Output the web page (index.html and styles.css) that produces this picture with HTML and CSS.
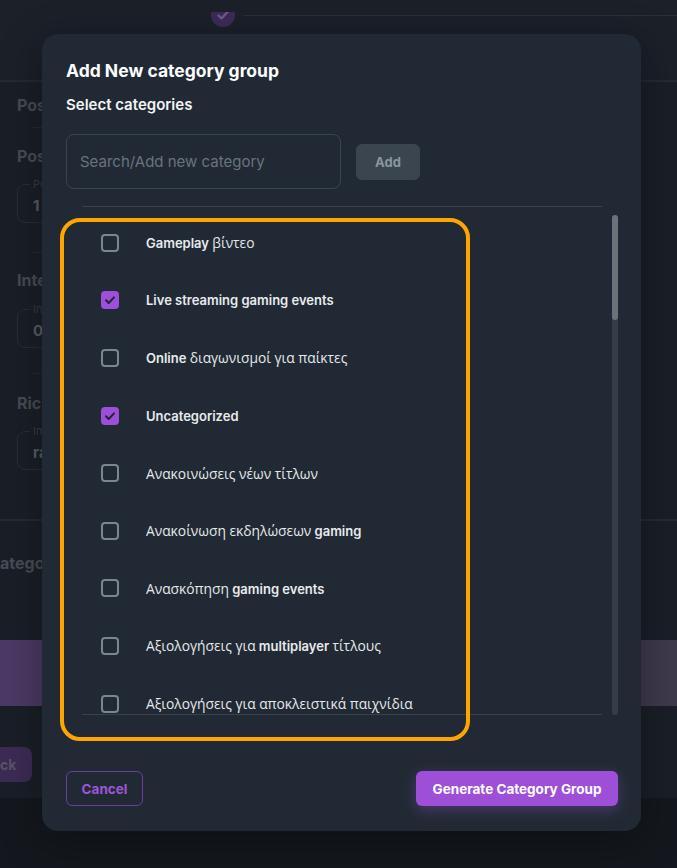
FILE: index.html
```html
<!DOCTYPE html>
<html lang="el">
<head>
<meta charset="utf-8">
<title>Add New category group</title>
<link rel="stylesheet" href="styles.css">
</head>
<body>
<div class="page">
  <div class="topbar">
    <div class="stepper">
      <div class="step-dot">
        <svg width="24" height="24" viewBox="0 0 24 24"><path d="M7.5 12.5l3 3 6-6.5" fill="none" stroke="#6e5d8a" stroke-width="2.2" stroke-linecap="round" stroke-linejoin="round"/></svg>
      </div>
      <div class="step-line"></div>
    </div>
  </div>
  <div class="settings">
    <div class="bg-title t1">Pos</div>
    <div class="bg-divider d1"></div>
    <div class="bg-title t2">Pos</div>
    <div class="bg-input i1"><span class="bg-label">Po</span><span class="bg-value">1</span></div>
    <div class="bg-divider d2"></div>
    <div class="bg-title t3">Inte</div>
    <div class="bg-input i2"><span class="bg-label">In</span><span class="bg-value">0</span></div>
    <div class="bg-divider d3"></div>
    <div class="bg-title t4">Ric</div>
    <div class="bg-input i3"><span class="bg-label">Im</span><span class="bg-value">ra</span></div>
  </div>
  <div class="full-line"></div>
  <div class="bg-title t5">ategor</div>
  <div class="banner"></div>
  <div class="back-btn">ck</div>
  <div class="bottom-band"></div>
</div>

<div class="modal">
  <h2 class="modal-title">Add New category group</h2>
  <div class="modal-sub">Select categories</div>
  <div class="search-row">
    <div class="search-input">Search/Add new category</div>
    <button class="add-btn">Add</button>
  </div>
  <div class="list-wrap">
    <div class="list">
      <div class="item"><span class="cb"></span><span class="label">Gameplay <span class="gr">βίντεο</span></span></div>
      <div class="item"><span class="cb checked"><svg width="18" height="18" viewBox="0 0 18 18"><path d="M5 9.3l2.7 2.7 5.3-5.6" fill="none" stroke="#2a2036" stroke-width="2" stroke-linecap="round" stroke-linejoin="round"/></svg></span><span class="label">Live streaming gaming events</span></div>
      <div class="item"><span class="cb"></span><span class="label">Online <span class="gr">διαγωνισμοί για παίκτες</span></span></div>
      <div class="item"><span class="cb checked"><svg width="18" height="18" viewBox="0 0 18 18"><path d="M5 9.3l2.7 2.7 5.3-5.6" fill="none" stroke="#2a2036" stroke-width="2" stroke-linecap="round" stroke-linejoin="round"/></svg></span><span class="label">Uncategorized</span></div>
      <div class="item"><span class="cb"></span><span class="label"><span class="gr">Ανακοινώσεις νέων τίτλων</span></span></div>
      <div class="item"><span class="cb"></span><span class="label"><span class="gr">Ανακοίνωση εκδηλώσεων</span> gaming</span></div>
      <div class="item"><span class="cb"></span><span class="label"><span class="gr">Ανασκόπηση</span> gaming events</span></div>
      <div class="item"><span class="cb"></span><span class="label"><span class="gr">Αξιολογήσεις για</span> multiplayer <span class="gr">τίτλους</span></span></div>
      <div class="item"><span class="cb"></span><span class="label"><span class="gr">Αξιολογήσεις για αποκλειστικά παιχνίδια</span></span></div>
    </div>
    <div class="scrollbar"><div class="thumb"></div></div>
  </div>
  <div class="modal-footer">
    <button class="btn-cancel">Cancel</button>
    <button class="btn-generate">Generate Category Group</button>
  </div>
  <div class="highlight"></div>
</div>
</body>
</html>
```

FILE: styles.css
```css
* { box-sizing: border-box; }
html, body { margin: 0; padding: 0; }
body {
  width: 677px;
  height: 868px;
  overflow: hidden;
  background: #1a1f27;
  font-family: "Inter", "Noto Sans", sans-serif;
  position: relative;
}

/* ---------- background page (dimmed) ---------- */
.page { width: 677px; height: 868px; display: flex; flex-direction: column; }
.topbar { height: 82px; border-bottom: 2px solid #242a32; background: #1b2029; }
.stepper {
  display: flex; align-items: flex-end;
  margin-top: 12px; height: 15px; overflow: hidden; padding-left: 211px;
}
.step-dot {
  width: 24px; height: 24px; border-radius: 50%;
  background: #3d2b58; flex: none; display: flex;
}
.step-line { flex: 1; height: 1px; background: #2b3038; margin-left: 8px; align-self: flex-start; margin-top: 3px; }

.settings { display: flex; flex-direction: column; padding-left: 17px; }
.bg-title { font-weight: 700; font-size: 16px; line-height: 20px; color: #464c54; white-space: nowrap; }
.t1 { margin-top: 13px; }
.t2 { margin-top: 18px; }
.t3 { margin-top: 17px; }
.t4 { margin-top: 19px; }
.t5 { margin-top: 32px; }
.bg-divider { height: 1px; background: #252b33; margin-left: 16px; width: 400px; }
.d1 { margin-top: 12px; }
.d2 { margin-top: 29px; }
.d3 { margin-top: 25px; }
.bg-input {
  position: relative; width: 300px; height: 39px;
  border: 1px solid #282e36; border-radius: 8px;
  display: flex; align-items: center; padding-left: 15px;
}
.i1 { margin-top: 18px; }
.i2 { margin-top: 19px; }
.i3 { margin-top: 18px; }
.bg-label {
  position: absolute; left: 12px; top: -7px; padding: 0 3px;
  font-size: 11px; line-height: 12px; color: #363c44; background: #1a1f27;
}
.bg-value { font-size: 15px; font-weight: 700; color: #575d65; margin-top: 4px; }
.full-line { height: 2px; background: #252b33; margin-top: 49px; }
.banner { height: 66px; margin-top: 67px; background: linear-gradient(90deg, #4c3a66 0%, #453656 50%, #3e3a4c 100%); }
.back-btn {
  margin-top: 41px; height: 35px; width: 32px;
  border-radius: 0 8px 8px 0; background: #3c2b55; color: #5a5466;
  font-weight: 700; font-size: 14px; display: flex; align-items: center; padding-left: 0;
}
.bottom-band { flex: 1; margin-top: 16px; background: #14181e; }

/* ---------- modal ---------- */
.modal {
  position: absolute; left: 42px; top: 34px;
  width: 599px; height: 797px;
  background: #212a34; border-radius: 16px;
  padding: 26px 23px 0 24px;
  display: flex; flex-direction: column;
  box-shadow: 0 10px 40px rgba(0,0,0,0.35);
}
.modal-title { margin: 0; font-size: 17.5px; line-height: 22px; font-weight: 700; color: #ffffff; }
.modal-sub { margin-top: 13px; font-size: 15px; line-height: 20px; font-weight: 600; color: #f2f3f5; }
.search-row { margin-top: 19px; display: flex; align-items: center; }
.search-input {
  width: 275px; height: 55px; border: 1px solid #3b4550; border-radius: 8px;
  display: flex; align-items: center; padding-left: 13px;
  font-size: 15px; color: #69737e;
}
.add-btn {
  margin-left: 15px; width: 64px; height: 36px; border: 0; border-radius: 6px;
  background: #3a4550; color: #8b959f; font-family: inherit; font-weight: 700; font-size: 13px;
}
.list-wrap { margin-top: 17px; margin-left: 16px; display: flex; }
.list {
  width: 520px; height: 509px; overflow: hidden;
  border-top: 1px solid #39424c; border-bottom: 1px solid #39424c;
  padding: 7px 0 0 19px;
}
.item { height: 57.6px; display: flex; align-items: center; }
.cb {
  width: 18px; height: 18px; border: 2px solid #7a8691; border-radius: 4px; flex: none; display: flex;
}
.cb.checked { border: 0; background: #9c4fd8; }
.label { margin-left: 27px; font-size: 13px; font-weight: 600; color: #e9ebee; white-space: nowrap; }
.gr { font-family: "Open Sans", "Noto Sans", sans-serif; font-weight: 400; font-size: 13.8px; color: #e6e8eb; }
.scrollbar { margin-left: 10px; margin-top: 9px; width: 6px; height: 500px; background: #353e48; border-radius: 3px; display: flex; flex-direction: column; }
.thumb { height: 105px; background: #6c7279; border-radius: 3px; }
.modal-footer { margin-top: 56px; display: flex; justify-content: space-between; }
.btn-cancel {
  width: 77px; height: 35px; border: 1px solid #6b3d9c; border-radius: 6px; background: transparent;
  color: #9e55da; font-family: inherit; font-weight: 700; font-size: 13.5px;
}
.btn-generate {
  width: 202px; height: 35px; border: 0; border-radius: 6px; background: #9d4fd8; color: #ffffff;
  font-family: inherit; font-weight: 700; font-size: 13.5px;
  box-shadow: 0 4px 14px rgba(157, 79, 216, 0.35);
}
.highlight {
  position: absolute; left: 18px; top: 184px; width: 410px; height: 523px;
  border: 4px solid #ffa500; border-radius: 20px; pointer-events: none;
}
```
